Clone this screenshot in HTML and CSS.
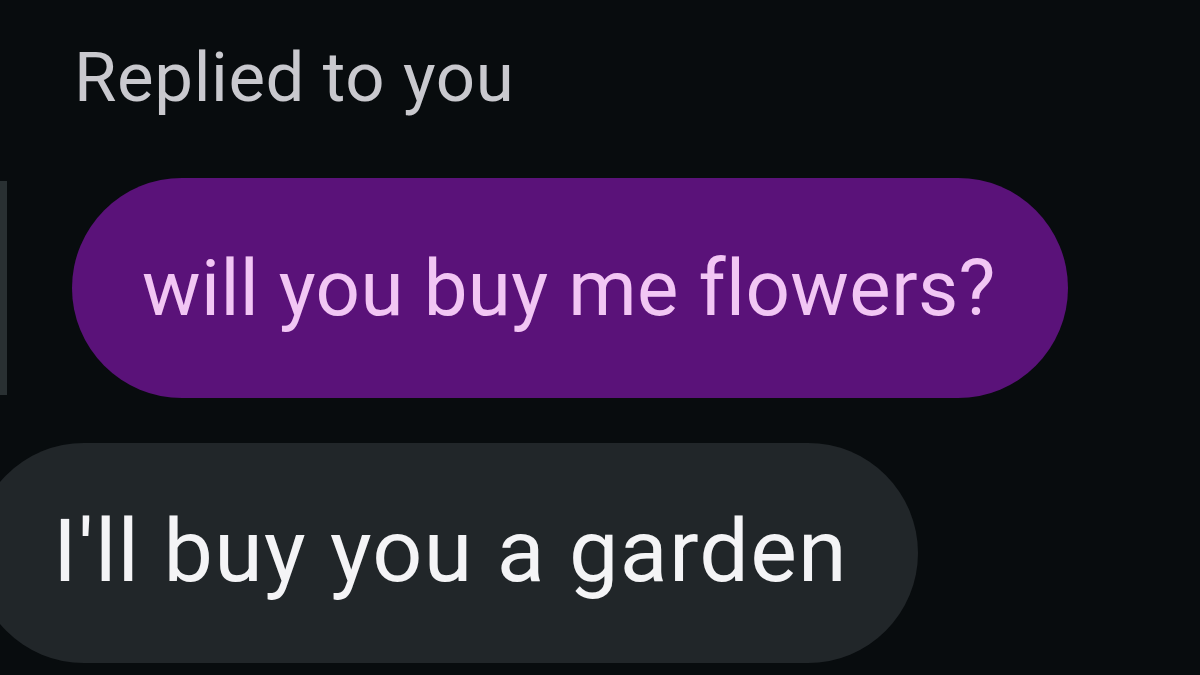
FILE: index.html
```html
<!DOCTYPE html>
<html lang="en">
<head>
    <meta charset="UTF-8">
    <meta name="viewport" content="width=device-width, initial-scale=1.0">
    <title>Reply</title>
    <link rel="stylesheet" href="styles.css">
</head>
<body>
    <div class="thread">
        <div class="reply-label">Replied to you</div>

        <div class="reply-row">
            <div class="reply-bar"></div>
            <div class="bubble bubble-quoted">will you buy me flowers?</div>
        </div>

        <div class="bubble bubble-incoming">I'll buy you a garden</div>
    </div>
</body>
</html>
```

FILE: styles.css
```css
* {
    box-sizing: border-box;
    margin: 0;
    padding: 0;
    font-family: Roboto, "Liberation Sans", sans-serif;
    font-variant-ligatures: none;
}

html, body {
    height: 100%;
    overflow: hidden;
}

body {
    background-color: #080c0e;
}

.thread {
    display: flex;
    flex-direction: column;
    align-items: flex-start;
    padding-top: 38px;
}

.reply-label {
    color: #c9c9ce;
    font-size: 69px;
    line-height: 80px;
    letter-spacing: 0.6px;
    padding-left: 74px;
}

.reply-row {
    display: flex;
    align-items: center;
    gap: 65px;
    margin-top: 60px;
}

.reply-bar {
    width: 7px;
    height: 214px;
    background-color: #293032;
}

.bubble {
    display: flex;
    align-items: center;
    height: 220px;
    border-radius: 110px;
    white-space: nowrap;
}

.bubble-quoted {
    width: 996px;
    padding-left: 70px;
    background-color: #5a1279;
    color: #f2c6f4;
    font-size: 78px;
    letter-spacing: 0.4px;
}

.bubble-incoming {
    width: 944px;
    margin-top: 45px;
    margin-left: -26px;
    padding-left: 79px;
    padding-bottom: 6px;
    background-color: #212629;
    color: #f4f4f6;
    font-size: 88px;
    letter-spacing: 1.3px;
}
```
